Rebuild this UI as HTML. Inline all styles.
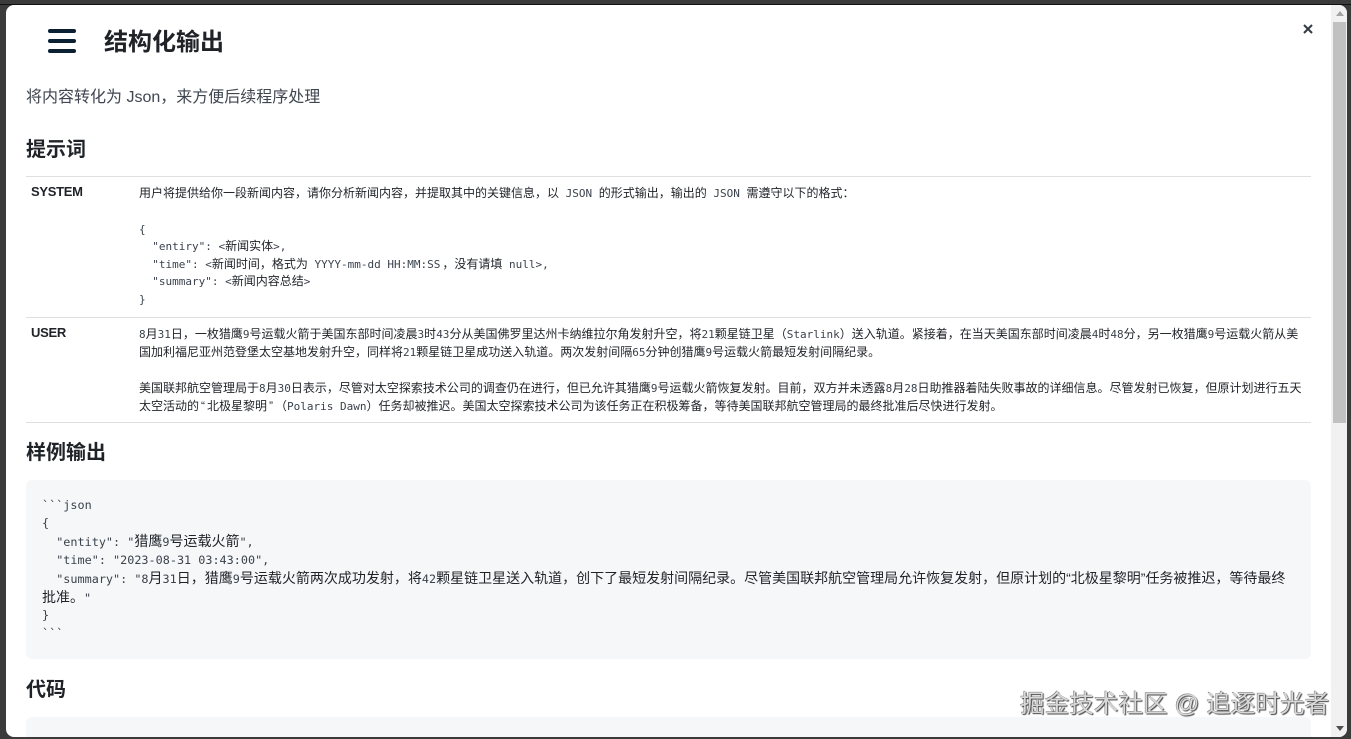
<!DOCTYPE html>
<html lang="zh"><head><meta charset="utf-8"><title>结构化输出</title>
<style>
html,body{margin:0;padding:0;width:1351px;height:739px;overflow:hidden;background:#3b3b3b}
body{position:relative;font-family:"Liberation Sans","Noto Sans CJK SC",sans-serif;text-spacing-trim:space-all}
#m{position:absolute;left:6px;top:5px;width:1341px;height:732px;background:#fff;border-radius:8px;overflow:hidden}
#top{position:absolute;left:0;top:4px;width:1351px;height:1px;background:#111}
.a{position:absolute;white-space:pre;margin:0}
.h{font-weight:700;color:#1f2328;font-size:20px;line-height:28px;left:20px}
.l{font-size:12px;line-height:18px;color:#1f2328;left:133px}
.c{font-size:14px;line-height:18px;color:#1f2328;left:36px}
i{font-style:normal;font-family:"DejaVu Sans Mono","Liberation Mono",monospace;color:#3a424c}
.l i{font-size:11px}.c i{font-size:11.8px}
q{quotes:none;padding:0 2px}
.c q{padding:0}
.r{position:absolute;left:20px;width:1285px;height:1px;background:#dfdfdf}
.b{position:absolute;left:42px;width:28px;height:4px;border-radius:2px;background:#0b2033}
.lb{font-weight:700;font-size:13px;letter-spacing:-.3px;line-height:20px;color:#1f2328;left:25px}
.cb{position:absolute;left:20px;width:1285px;background:#f6f7f9;border-radius:6px}
#wm{position:absolute;left:1020px;top:688px;font-size:24.6px;line-height:34px;color:#d8d8d8;text-shadow:1px 1px 1px #444,-0.5px -0.5px 0 #777;white-space:pre}
</style></head><body>
<div id="top"></div>
<div id="m">
<div class="b" style="top:24px"></div><div class="b" style="top:34px"></div><div class="b" style="top:44px"></div>
<div class="a" style="left:98px;top:21px;font-size:24px;line-height:34px;font-weight:700;color:#1f2328">结构化输出</div>
<svg class="a" style="left:1297px;top:19px" width="10" height="10" viewBox="0 0 10 10"><path d="M1 1L9 9M9 1L1 9" stroke="#333a42" stroke-width="2"/></svg>
<div class="a" style="left:20px;top:82px;font-size:16px;line-height:22px;color:#3f4650">将内容转化为 Json，来方便后续程序处理</div>
<div class="a h" style="top:131px">提示词</div>
<div class="r" style="top:171px"></div>
<div class="a lb" style="top:177px">SYSTEM</div>
<div class="a l" style="top:179px">用户将提供给你一段新闻内容，请你分析新闻内容，并提取其中的关键信息，以<i> JSON </i>的形式输出，输出的<i> JSON </i>需遵守以下的格式：</div>
<div class="a l" style="top:215px"><i>{</i></div>
<div class="a l" style="top:232px"><i>  "entiry": &lt;</i>新闻实体<i>&gt;,</i></div>
<div class="a l" style="top:250px"><i>  "time": &lt;</i>新闻时间，格式为<i> YYYY-mm-dd HH:MM:SS</i><span style="margin-left:2px">，</span>没有请填<i> null&gt;,</i></div>
<div class="a l" style="top:267px"><i>  "summary": &lt;</i>新闻内容总结<i>&gt;</i></div>
<div class="a l" style="top:285px"><i>}</i></div>
<div class="r" style="top:312px"></div>
<div class="a lb" style="top:318px">USER</div>
<div class="a l" style="top:320px"><i>8</i>月<i>31</i>日，一枚猎鹰<i>9</i>号运载火箭于美国东部时间凌晨<i>3</i>时<i>43</i>分从美国佛罗里达州卡纳维拉尔角发射升空，将<i>21</i>颗星链卫星（<i>Starlink</i>）送入轨道。紧接着，在当天美国东部时间凌晨<i>4</i>时<i>48</i>分，另一枚猎鹰<i>9</i>号运载火箭从美</div>
<div class="a l" style="top:338px">国加利福尼亚州范登堡太空基地发射升空，同样将<i>21</i>颗星链卫星成功送入轨道。两次发射间隔<i>65</i>分钟创猎鹰<i>9</i>号运载火箭最短发射间隔纪录。</div>
<div class="a l" style="top:374px">美国联邦航空管理局于<i>8</i>月<i>30</i>日表示，尽管对太空探索技术公司的调查仍在进行，但已允许其猎鹰<i>9</i>号运载火箭恢复发射。目前，双方并未透露<i>8</i>月<i>28</i>日助推器着陆失败事故的详细信息。尽管发射已恢复，但原计划进行五天</div>
<div class="a l" style="top:392px">太空活动的<q>“</q>北极星黎明<q>”</q>（<i>Polaris Dawn</i>）任务却被推迟。美国太空探索技术公司为该任务正在积极筹备，等待美国联邦航空管理局的最终批准后尽快进行发射。</div>
<div class="r" style="top:417px"></div>
<div class="a h" style="top:434px">样例输出</div>
<div class="cb" style="top:475px;height:179px"></div>
<div class="a c" style="top:490px"><i>&#96;&#96;&#96;json</i></div>
<div class="a c" style="top:508px"><i>{</i></div>
<div class="a c" style="top:527px"><i>  "entity": "</i>猎鹰<i>9</i>号运载火箭<i>",</i></div>
<div class="a c" style="top:545px"><i>  "time": "2023-08-31 03:43:00",</i></div>
<div class="a c" style="top:564px"><i>  "summary": "8</i>月<i>31</i>日，猎鹰<i>9</i>号运载火箭两次成功发射，将<i>42</i>颗星链卫星送入轨道，创下了最短发射间隔纪录。尽管美国联邦航空管理局允许恢复发射，但原计划的<q>“</q>北极星黎明<q>”</q>任务被推迟，等待最终</div>
<div class="a c" style="top:583px">批准。<i>"</i></div>
<div class="a c" style="top:600px"><i>}</i></div>
<div class="a c" style="top:618px"><i>&#96;&#96;&#96;</i></div>
<div class="a h" style="top:671px">代码</div>
<div class="cb" style="top:712px;height:40px"></div>
<div style="position:absolute;left:1325px;top:0;width:16px;height:732px;background:#f1f1f1"></div>
<div style="position:absolute;left:1327px;top:17px;width:13px;height:401px;background:#c1c1c1"></div>
<svg class="a" style="left:1328px;top:5px" width="12" height="8"><path d="M2 6L6 1L10 6Z" fill="#a3a3a3"/></svg>
<svg class="a" style="left:1328px;top:719px" width="12" height="8"><path d="M2 2L6 7L10 2Z" fill="#505050"/></svg>
</div>
<div id="wm">掘金技术社区 @ 追逐时光者</div>
</body></html>
